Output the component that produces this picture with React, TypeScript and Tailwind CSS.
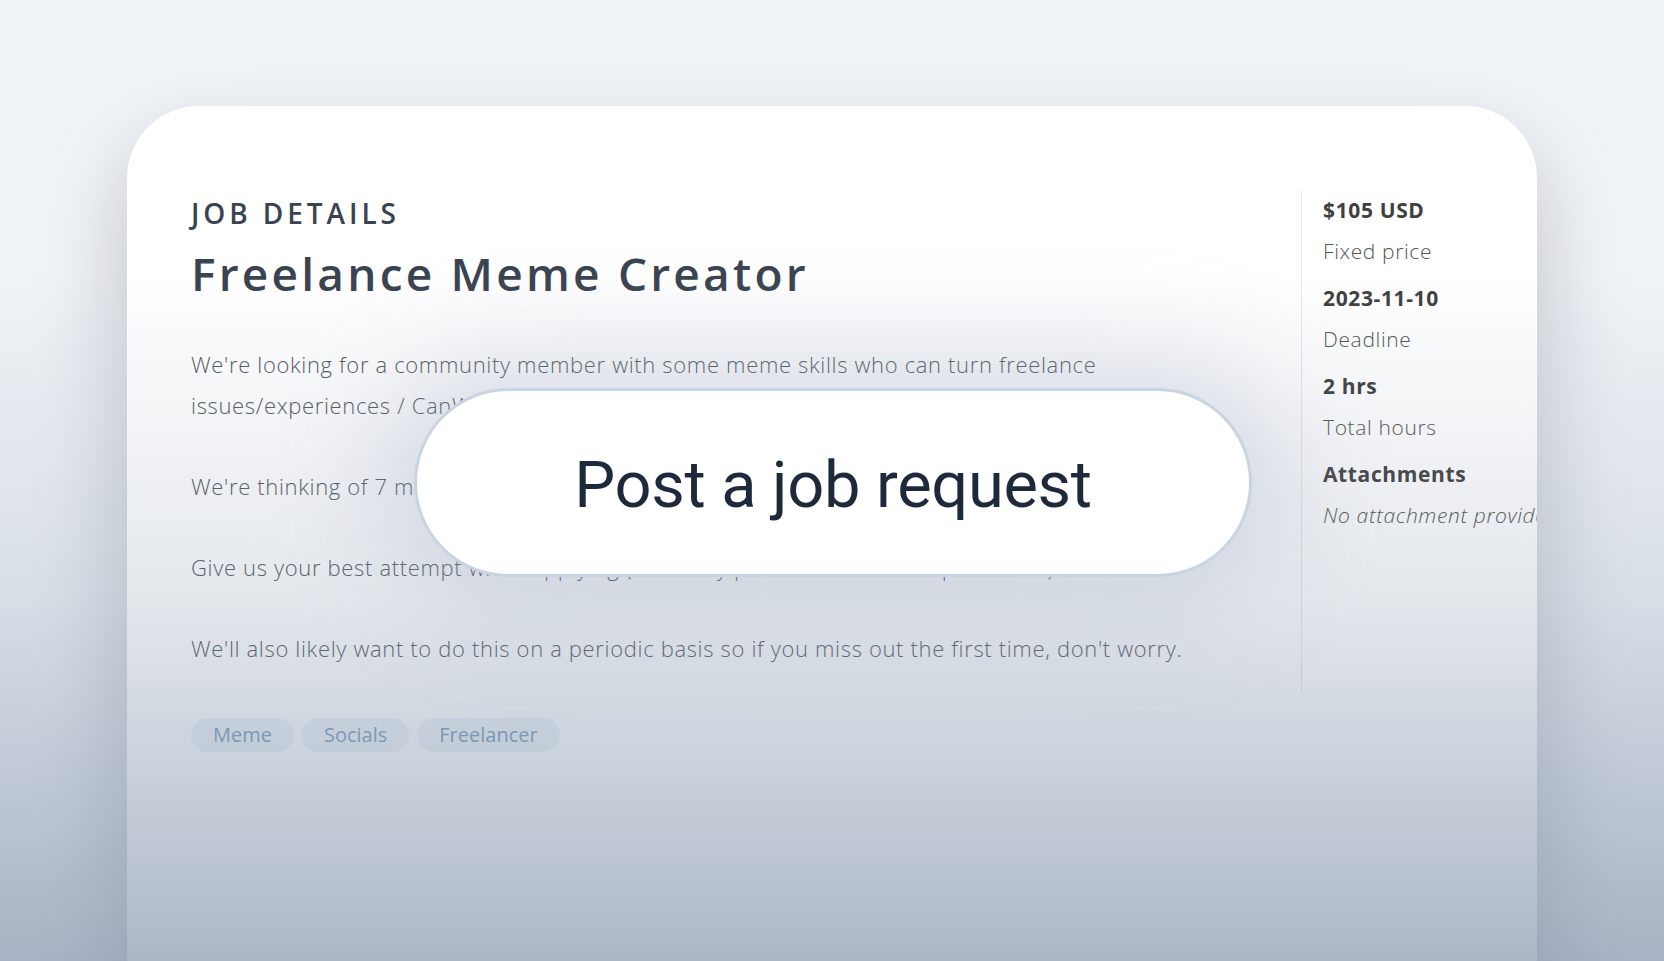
const paragraphs = [
  "We're looking for a community member with some meme skills who can turn freelance issues/experiences / CanWork features into memes for our socials.",
  "We're thinking of 7 memes to start with, delivered as images ready to post.",
  "Give us your best attempt when applying (we'll only pick one freelancer per round).",
  "We'll also likely want to do this on a periodic basis so if you miss out the first time, don't worry.",
];

const tags = ["Meme", "Socials", "Freelancer"];

const facts = [
  { value: "$105 USD", label: "Fixed price" },
  { value: "2023-11-10", label: "Deadline" },
  { value: "2 hrs", label: "Total hours" },
];

function Sidebar() {
  return (
    <aside className="h-[501px] flex-1 overflow-hidden whitespace-nowrap border-l border-[#e5e7eb] pl-[21px] text-[21px] leading-[41px] tracking-[0.03em]">
      <div className="-mt-px flex flex-col gap-[6px]">
        {facts.map((f) => (
          <div key={f.label}>
            <div className="font-bold text-[#404040]">{f.value}</div>
            <div className="font-light text-[#555]">{f.label}</div>
          </div>
        ))}
        <div>
          <div className="font-bold text-[#404040]">Attachments</div>
          <div className="font-light italic text-[#555]">No attachment provided</div>
        </div>
      </div>
    </aside>
  );
}

export default function App() {
  return (
    <div className="relative h-[961px] w-full overflow-hidden bg-[#f0f3f7] font-['Open_Sans',sans-serif]">
      {/* Card */}
      <div className="px-[127px] pt-[106px]">
        <div className="flex h-[920px] overflow-hidden rounded-[72px] bg-white pl-16 pt-[85px] shadow-[0_40px_90px_rgba(15,23,42,0.22)]">
          <main className="w-[1110px] shrink-0">
            <div className="text-[28px] font-semibold uppercase leading-[44px] tracking-[0.14em] text-[#3a4350]">
              Job details
            </div>
            <h1 className="text-[46px] font-semibold leading-[76px] tracking-[0.07em] text-[#3a4350]">
              Freelance Meme Creator
            </h1>
            <div className="mt-[33px] flex w-[1000px] flex-col gap-[40px] text-[22px] font-light leading-[41px] tracking-[0.03em] text-[#555a60]">
              {paragraphs.map((p) => (
                <p key={p}>{p}</p>
              ))}
            </div>
            <div className="mt-[49px] flex gap-2">
              {tags.map((t) => (
                <span
                  key={t}
                  className="h-[34px] rounded-full bg-[#eef4fa] px-[22px] text-[20px] leading-[34px] text-[#7e9fbc]"
                >
                  {t}
                </span>
              ))}
            </div>
          </main>
          <Sidebar />
        </div>
      </div>

      {/* Fade overlay */}
      <div className="pointer-events-none absolute inset-0 bg-[linear-gradient(to_bottom,rgba(120,138,163,0)_28%,rgba(120,138,163,0.2)_62%,rgba(120,138,163,0.61)_100%)]" />

      {/* Call to action */}
      <button className="absolute left-[414px] top-[388px] flex h-[189px] w-[838px] items-center justify-center rounded-full border-[3px] border-[#c9d4e2] bg-white shadow-[0_0_110px_30px_rgba(148,163,184,0.3)]">
        <span className="mt-[6px] font-['Roboto',sans-serif] text-[65px] font-normal tracking-[-0.005em] text-[#1e293b]">
          Post a job request
        </span>
      </button>
    </div>
  );
}
